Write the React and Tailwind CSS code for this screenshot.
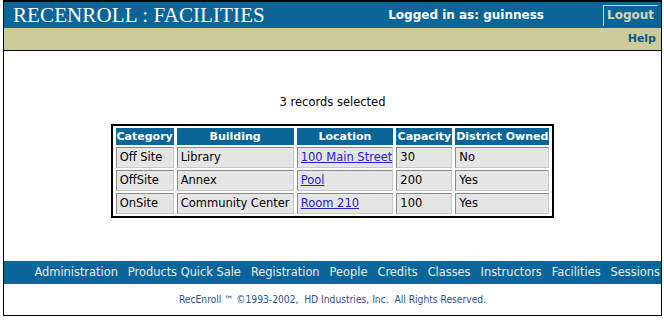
export default function App() {
  const verdana = { fontFamily: '"DejaVu Sans", Verdana, sans-serif' };
  const rows = [
    ["Off Site", "Library", "100 Main Street", "30", "No"],
    ["OffSite", "Annex", "Pool", "200", "Yes"],
    ["OnSite", "Community Center", "Room 210", "100", "Yes"],
  ];
  const heads = [
    ["Category", "w-[58px]"],
    ["Building", "w-[117px]"],
    ["Location", "w-[96px]"],
    ["Capacity", "w-[56px]"],
    ["District Owned", "w-[94px]"],
  ];
  const nav = ["Administration", "Products Quick Sale", "Registration", "People", "Credits", "Classes", "Instructors", "Facilities", "Sessions"];
  return (
    <div className="w-[664px] h-[321px] bg-white overflow-hidden pl-[3px]">
      <div className="w-[659px] h-[316px] border-l-[1px] border-r-[1px] border-b-[1px] border-t-[2px] border-black flex flex-col">
        <div className="h-[26px] bg-[#0a6599] flex items-center pl-[9px] pr-[3px]">
          <div className="text-white text-[21px] leading-none tracking-[0.1px]" style={{ fontFamily: '"Liberation Serif", "Times New Roman", serif' }}>
            RECENROLL : FACILITIES
          </div>
          <div className="ml-auto mr-[59px] text-white font-bold text-[12px]" style={verdana}>
            Logged in as: guinness
          </div>
          <div className="h-[21px] px-[3px] flex items-center border-[1px] border-t-[#d8d8c0] border-l-[#d8d8c0] border-r-[#3a4a55] border-b-[#3a4a55] bg-[#0a6599] text-[#d6d6b4] font-bold text-[12px]" style={verdana}>
            Logout
          </div>
        </div>
        <div className="h-[23px] bg-[#cccc99] flex items-center justify-end pr-[5px] border-b-[1px] border-black">
          <span className="text-[#0a5a8a] font-bold text-[11px]" style={verdana}>Help</span>
        </div>
        <div className="flex-1 flex flex-col items-center" style={verdana}>
          <div className="mt-[43px] text-[11.5px] text-black">3 records selected</div>
          <table className="mt-[13px] border-[2px] border-black border-separate border-spacing-x-[3px] border-spacing-y-[2px] text-[11.5px] table-fixed">
            <thead>
              <tr>
                {heads.map(([h, w]) => (
                  <th key={h} className={`${w} bg-[#0a6599] text-white font-bold text-[11px] h-[17px] p-0 leading-none whitespace-nowrap`}>
                    {h}
                  </th>
                ))}
              </tr>
            </thead>
            <tbody>
              {rows.map((r, i) => (
                <tr key={i}>
                  {r.map((c, j) => (
                    <td key={j} className="bg-[#e5e5e5] h-[21px] pl-[3px] pr-0 py-0 leading-none text-black whitespace-nowrap overflow-hidden border-[1px] border-t-[#8a8a8a] border-l-[#8a8a8a] border-r-[#c8c8c8] border-b-[#c8c8c8]">
                      {j === 2 ? <span className="text-[#2222cc] underline">{c}</span> : c}
                    </td>
                  ))}
                </tr>
              ))}
            </tbody>
          </table>
        </div>
        <div className="h-[23px] bg-[#0a6599] flex items-center justify-end gap-[10px] pr-[1px] text-[11.4px] text-[#e8eef2] whitespace-nowrap" style={verdana}>
          {nav.map((n) => (
            <span key={n}>{n}</span>
          ))}
        </div>
        <div className="h-[31px] flex items-center justify-center text-[10.2px] text-[#2a4f8f]" style={{ fontFamily: '"DejaVu Sans Condensed", "DejaVu Sans", Tahoma, sans-serif' }}>
          <span className="whitespace-pre">RecEnroll ™ ©1993-2002,  HD Industries, Inc.  All Rights Reserved.</span>
        </div>
      </div>
    </div>
  );
}
